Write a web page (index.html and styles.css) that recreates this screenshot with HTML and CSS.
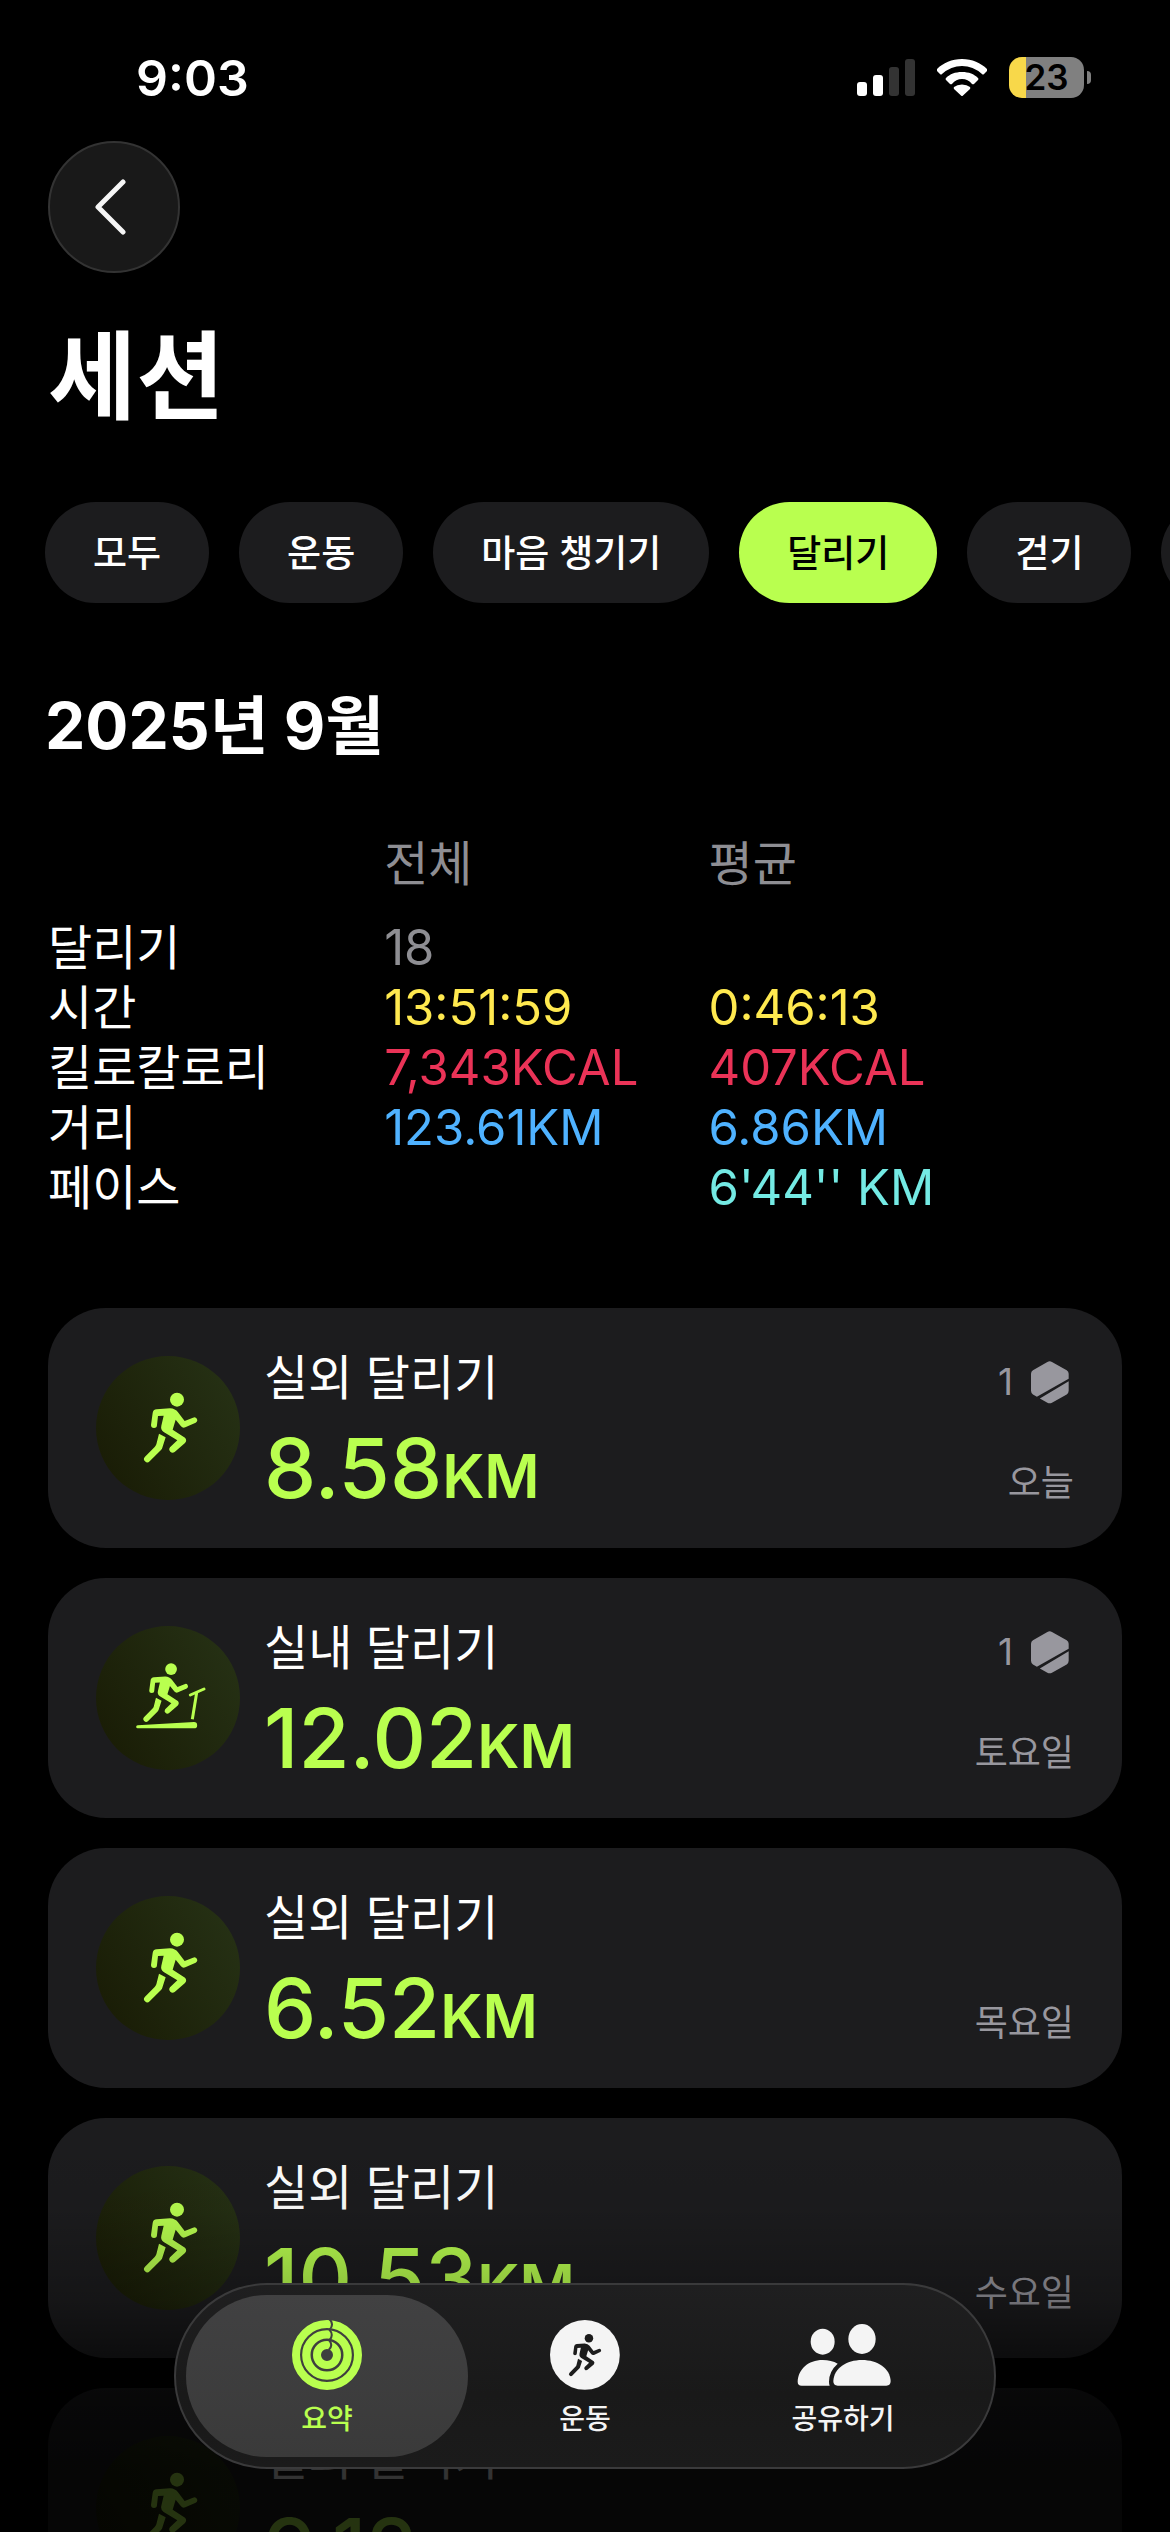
FILE: index.html
```html
<!DOCTYPE html>
<html lang="ko">
<head>
  <meta charset="UTF-8">
  <meta name="viewport" content="width=device-width, initial-scale=1.0">
  <title>세션</title>
  <link rel="stylesheet" href="styles.css">
</head>
<body>
  <svg class="defs" width="0" height="0" aria-hidden="true">
    <symbol id="runner" viewBox="18 17 432 432">
      <g id="runner-body">
        <circle cx="261" cy="148" r="21"/>
        <path d="M188 188 Q189 178 200 177 L240 174 Q256 175 264 186 L284 212 L309 202 A8 8 0 0 1 317 217 L286 231 Q278 234 273 228 L257 208 L248 238 L285 262 Q292 270 285 278 L254 305 A10 10 0 0 1 240 291 L262 270 L221 245 Q211 238 214 226 L221 196 L204 197 L201 224 A9 9 0 0 1 183 224 Z"/>
        <path d="M207 250 L227 261 L217 292 Q216 296 213 299 L179 333 A9 9 0 0 1 165 319 L194 290 Q198 286 199 282 Z"/>
      </g>
    </symbol>
    <symbol id="treadmill" viewBox="18 17 432 432">
      <use href="#runner-body" transform="translate(24 22) scale(.84)"/>
      <path d="M143 315 L312 305 A9 9 0 0 1 312 324 L143 324 A4 4 0 0 1 143 315 Z"/>
      <path d="M301 224 L342 206" stroke="currentColor" stroke-width="9" stroke-linecap="round"/>
      <path d="M320 217 L307 297" stroke="currentColor" stroke-width="9"/>
    </symbol>
    <symbol id="award" viewBox="300 92 116 131">
      <path d="M350 95 Q357 91 364 95 L409 120 Q415 124 415 131 L415 146 L318 201 L306 194 Q300 190 300 183 L300 131 Q300 124 306 120 Z"/>
      <path d="M415 154 L415 183 Q415 190 409 194 L364 219 Q357 223 350 219 L327 206 Z"/>
    </symbol>
  </svg>

  <div class="app">
    <header class="status-bar">
      <span class="clock">9:03</span>
      <div class="status-icons">
        <svg width="58" height="37" viewBox="0 0 58 37" fill="#fff">
          <rect x="0" y="23" width="10" height="14" rx="3"/>
          <rect x="16" y="16" width="10" height="21" rx="3"/>
          <rect x="32" y="8" width="10" height="29" rx="3" fill="#333"/>
          <rect x="48" y="0" width="10" height="37" rx="3" fill="#333"/>
        </svg>
        <svg width="50" height="37" viewBox="0 0 50 37" fill="#fff">
          <path d="M25 0 C15 0 6 4 0 10 Q-.5 11 0 12 L3 15 Q4 16 5 15 Q14 7 25 7 Q36 7 45 15 Q46 16 47 15 L50 12 Q50.500 11 50 10 C44 4 35 0 25 0Z"/>
          <path d="M25 13 C18 13 13 15 9 19 Q8 20 9 21 L13 25 Q14 25.500 15 25 Q19 20 25 20 Q31 20 35 25 Q36 25.500 37 25 L41 21 Q42 20 41 19 C37 15 32 13 25 13Z"/>
          <path d="M25 25.500 Q20 25.500 17 28 Q16.500 29 17 30 L24 36.500 Q25 37.500 26 36.500 L33 30 Q33.500 29 33 28 Q30 25.500 25 25.500Z"/>
        </svg>
        <span class="battery">23</span>
      </div>
    </header>

    <main>
      <button class="back" aria-label="뒤로">
        <svg width="32" height="56" viewBox="0 0 32 56" fill="none" stroke="#f5f5f5" stroke-width="5" stroke-linecap="round" stroke-linejoin="round">
          <path d="M29 3 L4 28 L29 53"/>
        </svg>
      </button>
      <h1>세션</h1>

      <div class="filters">
        <button>모두</button>
        <button>운동</button>
        <button>마음 챙기기</button>
        <button class="active">달리기</button>
        <button>걷기</button>
        <button>사이클</button>
      </div>

      <h2>2025년 9월</h2>
      <table class="stats">
        <thead>
          <tr><td></td><th>전체</th><th>평균</th></tr>
        </thead>
        <tbody>
          <tr><th>달리기</th><td class="count">18</td><td></td></tr>
          <tr class="time"><th>시간</th><td>13:51:59</td><td>0:46:13</td></tr>
          <tr class="kcal"><th>킬로칼로리</th><td>7,343KCAL</td><td>407KCAL</td></tr>
          <tr class="dist"><th>거리</th><td>123.61KM</td><td>6.86KM</td></tr>
          <tr class="pace"><th>페이스</th><td></td><td>6'44'' KM</td></tr>
        </tbody>
      </table>

      <div class="sessions">
        <a class="card" href="#">
          <svg class="kind"><use href="#runner"/></svg>
          <div class="info">
            <p class="name">실외 달리기</p>
            <p class="km">8.58<small>KM</small></p>
          </div>
          <div class="meta">
            <span class="awards">1 <svg><use href="#award"/></svg></span>
            <span class="day">오늘</span>
          </div>
        </a>
        <a class="card" href="#">
          <svg class="kind"><use href="#treadmill"/></svg>
          <div class="info">
            <p class="name">실내 달리기</p>
            <p class="km">12.02<small>KM</small></p>
          </div>
          <div class="meta">
            <span class="awards">1 <svg><use href="#award"/></svg></span>
            <span class="day">토요일</span>
          </div>
        </a>
        <a class="card" href="#">
          <svg class="kind"><use href="#runner"/></svg>
          <div class="info">
            <p class="name">실외 달리기</p>
            <p class="km">6.52<small>KM</small></p>
          </div>
          <div class="meta">
            <span class="day">목요일</span>
          </div>
        </a>
        <a class="card" href="#">
          <svg class="kind"><use href="#runner"/></svg>
          <div class="info">
            <p class="name">실외 달리기</p>
            <p class="km">10.53<small>KM</small></p>
          </div>
          <div class="meta">
            <span class="day">수요일</span>
          </div>
        </a>
        <a class="card" href="#">
          <svg class="kind"><use href="#runner"/></svg>
          <div class="info">
            <p class="name">실외 달리기</p>
            <p class="km">9.12<small>KM</small></p>
          </div>
        </a>
      </div>
    </main>

    <div class="fade"></div>

    <nav class="tabs">
      <a class="active" href="#">
        <svg width="70" height="70" viewBox="93 90 210 210" fill="none">
          <g stroke="currentColor">
            <circle cx="198" cy="195" r="93" stroke-width="24"/>
            <circle cx="198" cy="195" r="62" stroke-width="25"/>
            <circle cx="198" cy="195" r="30" stroke-width="24"/>
          </g>
          <path d="M206 88 Q220 103 206 119 M205 119 Q219 134 206 150 M204 150 Q218 166 203 180" stroke="#404041" stroke-width="6"/>
        </svg>
        요약
      </a>
      <a href="#">
        <svg width="70" height="70" viewBox="68 58 347 347">
          <circle cx="241" cy="231" r="173" fill="currentColor"/>
          <use href="#runner-body" fill="#1c1c1c"/>
        </svg>
        운동
      </a>
      <a href="#">
        <svg width="94" height="70" viewBox="50 90 280 210" fill="currentColor" overflow="visible">
          <ellipse cx="129" cy="155" rx="36" ry="39"/>
          <ellipse cx="247" cy="147" rx="41" ry="45"/>
          <path d="M174 287 Q161 287 161 273 C163 235 200 210 247 210 C294 210 331 235 333 273 Q333 287 320 287 Z"/>
          <path d="M66 287 Q54 287 54 275 C56 238 85 210 129 210 Q155 210 174 221 Q148 244 148 275 Q148 282 150 287 Z"/>
        </svg>
        공유하기
      </a>
    </nav>
  </div>
</body>
</html>
```

FILE: styles.css
```css
* { box-sizing: border-box; }
body { margin: 0; background: #000; color: #fff; font-family: Inter, "Noto Sans CJK KR", sans-serif; }
h1, h2, p { margin: 0; }
a { color: inherit; text-decoration: none; }
button { border: 0; font-family: inherit; color: inherit; }
.defs { position: absolute; }
.app { position: relative; height: 100vh; overflow: hidden; }

.status-bar { display: flex; justify-content: space-between; align-items: center; height: 141px; padding: 14px 86px 0 136px; }
.clock { font-size: 50px; font-weight: 600; line-height: 60px; }
.status-icons { display: flex; align-items: center; gap: 22px; }
.battery { position: relative; width: 75px; height: 41px; border-radius: 13px; background: linear-gradient(90deg, #f8d84a 17px, #808080 17px); color: #000; font-size: 35px; font-weight: 600; line-height: 41px; text-align: center; }
.battery::after { content: ""; position: absolute; left: 78px; top: 14px; width: 4px; height: 13px; border-radius: 0 6px 6px 0; background: #808080; }

main { padding: 0 48px; }
.back { display: flex; align-items: center; justify-content: center; width: 132px; height: 132px; padding: 0 8px 0 0; border: 2px solid #333; border-radius: 50%; background: #191919; }
h1 { margin-top: 53px; font-size: 96px; line-height: 100px; font-weight: 700; }
.filters { display: flex; gap: 30px; margin: 76px -48px 0 -3px; overflow: hidden; }
.filters button { flex: none; height: 101px; padding: 0 48px 4px; border-radius: 51px; background: #1c1c1e; font-size: 37px; font-weight: 500; }
.filters .active { background: #b9ff4f; color: #000; }

h2 { margin: 83px 0 0 -3px; font-size: 64px; line-height: 80px; font-weight: 700; }
.stats { width: 100%; margin-top: 68px; border-collapse: collapse; table-layout: fixed; font-size: 49px; line-height: 60px; text-align: left; }
.stats th, .stats td { height: 60px; padding: 0; font-weight: 400; }
.stats th { font-size: 48px; }
.stats tr > :first-child { width: 31.300%; }
.stats tr > :nth-child(2) { width: 30.200%; }
.stats thead th { height: 84px; vertical-align: top; color: #8e8e93; }
.stats td.count { color: #8e8e93; }
.time td { color: #ffe94f; }
.kcal td { color: #ea3357; }
.dist td { color: #4fb2ff; }
.pace td { color: #74eae4; }

.sessions { display: flex; flex-direction: column; gap: 30px; margin-top: 90px; }
.card { display: flex; height: 240px; padding: 48px; border-radius: 58px; background: #1c1c1e; }
.kind { flex: none; width: 144px; height: 144px; border-radius: 50%; background: linear-gradient(60deg, #181a04, #273316); color: #b9ff4f; fill: currentColor; }
.info { flex: 1; margin-left: 24px; }
.name { font-size: 48px; line-height: 44px; }
.km { margin-top: 20px; color: #b9ff4f; font-size: 83px; line-height: 96px; font-weight: 500; }
.km small { font-size: 60px; font-weight: 600; }
.meta { display: flex; flex-direction: column; justify-content: space-between; align-items: flex-end; margin: 2px 0 -7px; color: #98979e; font-size: 37px; line-height: 48px; }
.awards { display: flex; align-items: center; gap: 18px; margin-right: 5px; }
.awards svg { width: 38px; height: 43px; fill: #98979e; }
.day { margin-top: auto; font-size: 36px; }

.fade { position: absolute; left: 0; right: 0; bottom: 0; height: 400px; background: linear-gradient(rgba(0,0,0,0), rgba(0,0,0,.05) 20%, rgba(0,0,0,.25) 42%, rgba(0,0,0,.52) 55%, rgba(0,0,0,.72) 66%, rgba(0,0,0,.8) 85%); pointer-events: none; }
.tabs { position: absolute; bottom: 63px; left: 50%; transform: translateX(-50%); display: flex; padding: 10px; border: 2px solid #3a3a3b; border-radius: 93px; background: linear-gradient(#1f1f20, #191919 60%, #1b1b1b); color: #f4f4f4; }
.tabs a { display: flex; flex-direction: column; align-items: center; gap: 9px; width: 282px; height: 162px; padding-top: 25px; border-radius: 81px; font-size: 28px; line-height: 40px; font-weight: 500; }
.tabs a + a { margin-left: -24px; }
.tabs .active { background: linear-gradient(#414142, #3a3a3a); color: #b9ff4f; }
```
